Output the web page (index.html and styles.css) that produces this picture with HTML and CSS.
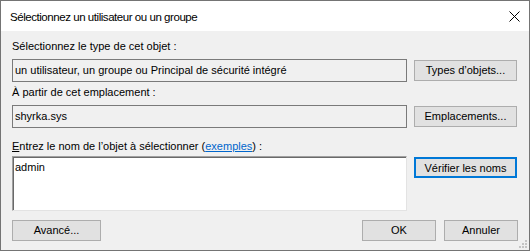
FILE: index.html
```html
<!DOCTYPE html>
<html lang="fr">
<head>
<meta charset="utf-8">
<title>Sélectionnez un utilisateur ou un groupe</title>
<link rel="stylesheet" href="styles.css">
</head>
<body>
<div class="window">
  <div class="titlebar">
    <span class="title">Sélectionnez un utilisateur ou un groupe</span>
    <svg class="close" width="11" height="11" viewBox="0 0 11 11"><path d="M0.5 0.5 L10.5 10.5 M10.5 0.5 L0.5 10.5" stroke="#000" stroke-width="1" fill="none"/></svg>
  </div>
  <div class="content">
    <div class="label l1">Sélectionnez le type de cet objet :</div>
    <div class="row">
      <div class="field">un utilisateur, un groupe ou Principal de sécurité intégré</div>
      <button class="btn">Types d’objets...</button>
    </div>
    <div class="label l2">À partir de cet emplacement :</div>
    <div class="row">
      <div class="field">shyrka.sys</div>
      <button class="btn">Emplacements...</button>
    </div>
    <div class="label l3"><u>E</u>ntrez le nom de l’objet à sélectionner (<a class="link" href="#">exemples</a>) :</div>
    <div class="row top">
      <div class="area">admin</div>
      <button class="btn focus">Vérifier les noms</button>
    </div>
    <div class="footer">
      <button class="btn adv">Avancé...</button>
      <div class="right">
        <button class="btn ok">OK</button>
        <button class="btn cancel">Annuler</button>
      </div>
    </div>
  </div>
  <svg class="grip" width="8" height="8" viewBox="0 0 8 8">
    <rect x="6" y="0" width="2" height="2" fill="#c4c4c4"/>
    <rect x="3" y="3" width="2" height="2" fill="#c4c4c4"/>
    <rect x="6" y="3" width="2" height="2" fill="#c4c4c4"/>
    <rect x="0" y="6" width="2" height="2" fill="#c4c4c4"/>
    <rect x="3" y="6" width="2" height="2" fill="#c4c4c4"/>
    <rect x="6" y="6" width="2" height="2" fill="#c4c4c4"/>
  </svg>
</div>
</body>
</html>
```
FILE: styles.css
```css
html, body {
  margin: 0;
  padding: 0;
  background: #ffffff;
}
.window {
  position: relative;
  width: 530px;
  height: 251px;
  box-sizing: border-box;
  border: 1px solid #747474;
  background: #f0f0f0;
  font-family: "Liberation Sans", Arial, sans-serif;
  font-size: 11px;
  color: #000;
  overflow: hidden;
}
.titlebar {
  height: 30px;
  background: #ffffff;
  display: flex;
  align-items: center;
  justify-content: space-between;
  padding: 0 9px 0 9px;
}
.title {
  font-family: "Liberation Sans", Arial, sans-serif;
  font-size: 11.5px;
  letter-spacing: -0.45px;
  color: #000;
  margin-top: 1px;
}
.close {
  display: block;
}
.content {
  padding: 0 11px 0 11px;
}
.label {
  height: 13px;
  line-height: 13px;
  white-space: nowrap;
}
.l1 { margin-top: 9px; }
.l2 { margin-top: 4px; }
.l3 { margin-top: 12px; }
.link {
  color: #0066cc;
  text-decoration: underline;
}
.row {
  display: flex;
  align-items: center;
  gap: 7px;
  margin-top: 6px;
}
.row.top {
  align-items: flex-start;
  margin-top: 3px;
}
.field {
  width: 395px;
  height: 23px;
  box-sizing: border-box;
  border: 1px solid #7a7a7a;
  background: #f0f0f0;
  padding: 0 2px;
  line-height: 21px;
  white-space: nowrap;
}
.area {
  width: 395px;
  height: 55px;
  box-sizing: border-box;
  background: #ffffff;
  border-top: 1px solid #a0a0a0;
  border-left: 1px solid #a0a0a0;
  border-right: 1px solid #e3e3e3;
  border-bottom: 1px solid #e3e3e3;
  box-shadow: inset 1px 1px 0 #696969;
  padding: 4px 0 0 2px;
  line-height: 13px;
}
.btn {
  width: 103px;
  height: 21px;
  box-sizing: border-box;
  border: 1px solid #adadad;
  background: #e1e1e1;
  font-family: "Liberation Sans", Arial, sans-serif;
  font-size: 11px;
  color: #000;
  padding: 0;
  margin: 0;
  line-height: 19px;
}
.btn.focus {
  border: 2px solid #0078d7;
  margin-top: 1px;
}
.footer {
  display: flex;
  justify-content: space-between;
  margin-top: 9px;
}
.right {
  display: flex;
  gap: 8px;
}
.adv { width: 89px; }
.ok { width: 74px; }
.cancel { width: 74px; }
.grip {
  position: absolute;
  right: 2px;
  bottom: 2px;
}
```
